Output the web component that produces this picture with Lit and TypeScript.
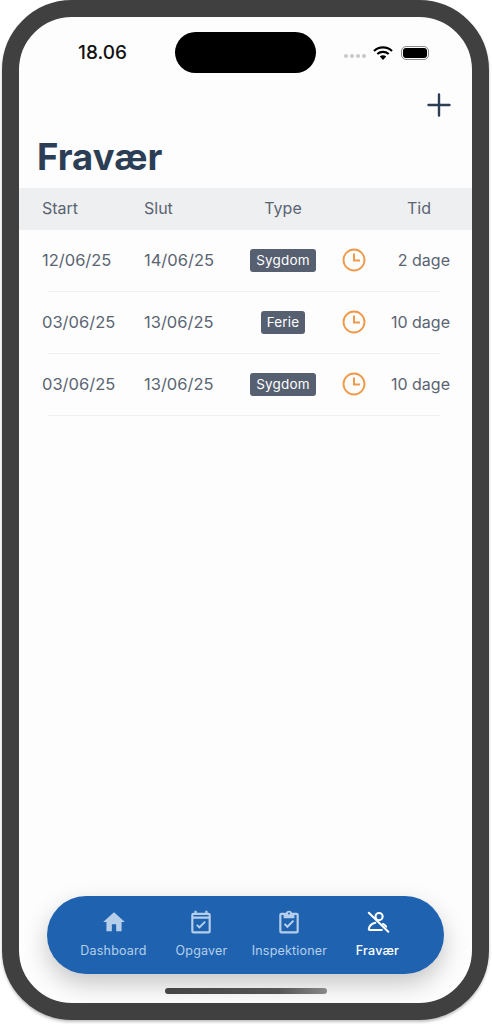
import { LitElement, html, css, svg } from "lit";
import { customElement } from "lit/decorators.js";

const rows = [
  { start: "12/06/25", end: "14/06/25", type: "Sygdom", time: "2 dage" },
  { start: "03/06/25", end: "13/06/25", type: "Ferie", time: "10 dage" },
  { start: "03/06/25", end: "13/06/25", type: "Sygdom", time: "10 dage" },
];

const icons = {
  home: svg`<path fill="currentColor" d="M10 20.5v-6.5h4v6.5h5v-8.5h3L12 3 2 12h3v8.500z"/>`,
  calendar: svg`<path fill="currentColor" d="M19 3.500h-1V1.500h-2v2H8v-2H6v2H5a2 2 0 0 0-2 2v15a2 2 0 0 0 2 2h14a2 2 0 0 0 2-2v-15a2 2 0 0 0-2-2zm0 17H5V9h14v11.500zM5 7V5.500h14V7H5zm5.500 11.200-3-3 1.200-1.200 1.800 1.800 4.800-4.800 1.200 1.200-6 6z"/>`,
  clipboard: svg`<path fill="currentColor" d="M19 3.500h-4.200C14.400 2.300 13.300 1.500 12 1.500s-2.400.8-2.800 2H5a2 2 0 0 0-2 2v15a2 2 0 0 0 2 2h14a2 2 0 0 0 2-2v-15a2 2 0 0 0-2-2zm-7-.2a.9.9 0 1 1 0 1.800.9.900 0 0 1 0-1.800zM19 20.500H5v-15h2v3h10v-3h2v15zm-8.500-2.800-3.300-3.300 1.300-1.300 2 2 5-5 1.300 1.300-6.300 6.300z"/>`,
  person: svg`<g fill="none" stroke="currentColor" stroke-width="1.900" stroke-linecap="round"><circle cx="13" cy="7" r="3.300"/><path d="M9.500 12.800C6.500 13.600 4 15.500 3.500 18.500c-.1.500.2.800.7.800H15.500"/><path d="M16.500 13.800c1.200.6 2.300 1.500 3 2.500"/><path d="M3.500 3.500 21.500 21"/></g>`,
};

const nav = [
  { label: "Dashboard", icon: icons.home, active: false },
  { label: "Opgaver", icon: icons.calendar, active: false },
  { label: "Inspektioner", icon: icons.clipboard, active: false },
  { label: "Fravær", icon: icons.person, active: true },
];

@customElement("app-root")
export class AppRoot extends LitElement {
  static styles = css`
    :host {
      display: block;
      width: 492px;
      height: 1024px;
      background: #fff;
      font-family: Inter, "Liberation Sans", sans-serif;
      overflow: hidden;
    }
    .phone {
      box-sizing: border-box;
      width: 487px;
      height: 1020px;
      margin-left: 2px;
      border: 17px solid #404040;
      border-radius: 70px;
      background: #fdfdfd;
      box-shadow: 0 2px 3px rgba(0, 0, 0, 0.25);
      display: flex;
      flex-direction: column;
      overflow: hidden;
    }
    .status {
      height: 57px;
      padding-top: 15px;
      box-sizing: content-box;
      display: grid;
      grid-template-columns: 156px 141px 1fr;
      align-items: start;
      flex: none;
    }
    .time {
      font-size: 19px;
      font-weight: 500;
      line-height: 42px;
      color: #111;
      padding-left: 59px;
    }
    .island {
      height: 41px;
      border-radius: 21px;
      background: #000;
    }
    .indicators {
      display: flex;
      align-items: center;
      height: 42px;
      padding-left: 28px;
      gap: 7px;
    }
    .dots {
      display: flex;
      gap: 2px;
      margin-top: 5px;
    }
    .dots i {
      width: 4px;
      height: 4px;
      border-radius: 50%;
      background: #c9c9c9;
    }
    .battery {
      box-sizing: border-box;
      width: 28px;
      height: 14px;
      margin-left: 1px;
      border: 1px solid #8a8a8a;
      border-radius: 5px;
      padding: 1px;
    }
    .battery b {
      display: block;
      height: 100%;
      background: #000;
      border-radius: 3px;
    }
    .actions {
      display: flex;
      justify-content: flex-end;
      padding-right: 21px;
      height: 30px;
      flex: none;
    }
    .actions svg {
      width: 24px;
      height: 24px;
      color: #2c3e55;
      margin-top: 4px;
    }
    h1 {
      margin: 0;
      padding: 15px 0 0 18px;
      height: 54px;
      font-size: 36.500px;
      line-height: 46px;
      font-weight: 700;
      color: #2c3e55;
      flex: none;
    }
    .tr {
      display: grid;
      grid-template-columns: 102px 80px 118px 24px 1fr;
      align-items: center;
      padding: 0 22px 2px 23px;
      color: #5a6472;
      font-size: 16.500px;
      box-sizing: border-box;
    }
    .tr > :nth-child(3) {
      text-align: center;
    }
    .tr > :nth-child(5) {
      text-align: right;
      font-size: 16px;
    }
    .head {
      height: 42px;
      background: #eeeff1;
      flex: none;
      font-size: 16px;
    }
    .head > :nth-child(4) {
      grid-column: 5;
      text-align: right;
      padding-right: 19px;
    }
    .row {
      height: 62px;
      position: relative;
      flex: none;
    }
    .row::after {
      content: "";
      position: absolute;
      left: 29px;
      right: 31px;
      bottom: 0;
      height: 1px;
      background: #f1f1f2;
    }
    .tag {
      display: inline-block;
      padding: 0 6px;
      height: 23px;
      line-height: 23px;
      background: #566070;
      color: #fff;
      font-size: 13.500px;
      font-weight: 400;
      letter-spacing: 0.2px;
      border-radius: 3px;
    }
    .clock {
      width: 24px;
      height: 24px;
      justify-self: center;
      color: #ef9a4a;
      display: block;
    }
    .spacer {
      flex: 1;
    }
    .navbar {
      margin: 0 28px;
      height: 78px;
      border-radius: 39px;
      background: #1f63b0;
      box-shadow: 0 10px 24px rgba(0, 0, 0, 0.22);
      display: grid;
      grid-template-columns: 88px 88px 88px 88px;
      justify-content: center;
      justify-items: center;
      flex: none;
    }
    .item {
      display: flex;
      flex-direction: column;
      align-items: center;
      padding-top: 13px;
      color: #b5cfeb;
      font-size: 12.500px;
      font-weight: 400;
      letter-spacing: 0.2px;
      white-space: nowrap;
    }
    .item.on {
      color: #fff;
      font-weight: 500;
    }
    .item svg {
      width: 26px;
      height: 26px;
      margin-bottom: 6px;
      display: block;
    }
    .item span {
      line-height: 20px;
    }
    .bar {
      flex: none;
      width: 162px;
      height: 6px;
      border-radius: 3px;
      background: linear-gradient(90deg, #444, #555 70%, #888);
      margin: 14px auto 9px;
    }
  `;

  render() {
    return html`
      <div class="phone">
        <div class="status">
          <div class="time">18.06</div>
          <div class="island"></div>
          <div class="indicators">
            <span class="dots"><i></i><i></i><i></i><i></i></span>
            <svg width="20" height="16" viewBox="0 0 20 16">
              <g fill="none" stroke="#000" stroke-width="2.200">
                <path d="M1 6a13 13 0 0 1 18 0" />
                <path d="M4.300 9a8.500 8.500 0 0 1 11.400 0" />
              </g>
              <path d="M6.800 11.500a4.500 4.500 0 0 1 6.400 0L10 15z" fill="#000" />
            </svg>
            <span class="battery"><b></b></span>
          </div>
        </div>
        <div class="actions">
          <svg viewBox="0 0 24 24">
            <path d="M12 1.500v21M1.500 12h21" fill="none" stroke="currentColor" stroke-width="2.400" stroke-linecap="round" />
          </svg>
        </div>
        <h1>Fravær</h1>
        <div class="tr head">
          <span>Start</span><span>Slut</span><span>Type</span><span>Tid</span>
        </div>
        ${rows.map(
          (r) => html`
            <div class="tr row">
              <span>${r.start}</span>
              <span>${r.end}</span>
              <span><span class="tag">${r.type}</span></span>
              <svg class="clock" viewBox="0 0 24 24">
                <g fill="none" stroke="currentColor" stroke-width="1.900">
                  <circle cx="12" cy="12" r="10.500" />
                  <path d="M12 5.500v7h6" stroke-width="2" />
                </g>
              </svg>
              <span>${r.time}</span>
            </div>
          `
        )}
        <div class="spacer"></div>
        <nav class="navbar">
          ${nav.map(
            (n) => html`
              <div class="item ${n.active ? "on" : ""}">
                <svg viewBox="0 0 24 24">${n.icon}</svg>
                <span>${n.label}</span>
              </div>
            `
          )}
        </nav>
        <div class="bar"></div>
      </div>
    `;
  }
}
